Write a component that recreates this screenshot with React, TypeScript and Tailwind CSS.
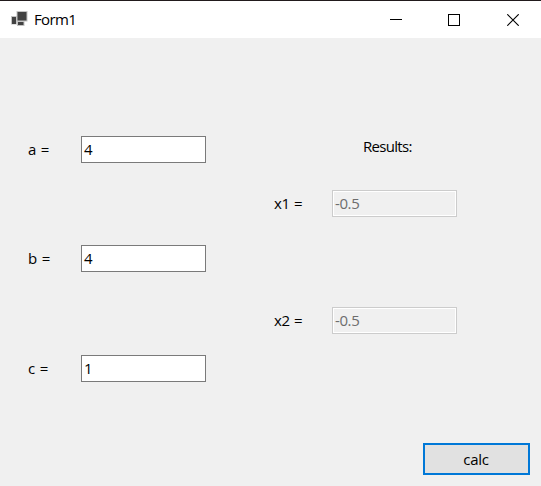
import React from "react";

function Field({ label, value, disabled = false }: { label: string; value: string; disabled?: boolean }) {
  return (
    <div className="flex h-[27px] items-center">
      <span className={disabled ? "w-[58px] pb-0.5 tracking-[-0.4px] [word-spacing:1px]" : "w-[53px] pb-0.5 tracking-[-0.3px] [word-spacing:1.2px]"}>
        {label}
      </span>
      <div
        className={
          disabled
            ? "h-[27px] w-[125px] border border-[#cccccc] bg-white p-px text-[#6d6d6d]"
            : "h-[27px] w-[125px] border border-[#7a7a7a] bg-white p-px"
        }
      >
        <div className={disabled ? "h-full bg-[#f0f0f0] pl-px leading-[23px] tracking-[-0.4px]" : "h-full pl-px leading-[23px]"}>
          {value}
        </div>
      </div>
    </div>
  );
}

export default function App() {
  return (
    <div className="flex h-[486px] w-[541px] flex-col overflow-hidden border-t border-[#211a1c] bg-[#f0f0f0] font-['Open_Sans','Noto_Sans',sans-serif] text-[15px] leading-5 text-black">
      <header className="flex h-[37px] shrink-0 items-center bg-white pl-[11px] pr-[22px]">
        <svg width="17" height="16" viewBox="0 0 17 16" className="-mt-px">
          <path d="M5.5 0h11v10.5h-3V15h-7.500v-1.500H0V5h5.500z" fill="#c4c4c4" />
          <path d="M6.500 1h9v8.500h-9zM1 6h4v7H1zM7 11h5.500v3H7z" fill="#424242" />
        </svg>
        <h1 className="ml-[6px] mr-auto pb-0.5 tracking-[-0.65px]">Form1</h1>
        <div className="flex gap-[46px]">
          <svg width="12" height="12" viewBox="0 0 12 12" shapeRendering="crispEdges">
            <path d="M0 5.5h12" stroke="#000" />
          </svg>
          <svg width="12" height="12" viewBox="0 0 12 12" shapeRendering="crispEdges">
            <path d="M.5.5h11v11H.5z" fill="none" stroke="#000" />
          </svg>
          <svg width="12" height="12" viewBox="0 0 12 12" className="ml-px">
            <path d="M.3.3l11.4 11.4M11.7.3L.3 11.7" stroke="#000" strokeWidth="1.15" />
          </svg>
        </div>
      </header>
      <main className="flex grow items-start">
        <section className="flex w-[274px] flex-col pl-7 pt-[98px]">
          <Field label="a =" value="4" />
          <div className="h-[82px]" />
          <Field label="b =" value="4" />
          <div className="h-[83px]" />
          <Field label="c =" value="1" />
        </section>
        <section className="flex w-[256px] flex-col pt-[98px]">
          <p className="ml-[89px] tracking-[-0.7px]">Results:</p>
          <div className="mt-[34px]">
            <Field label="x1 =" value="-0.5" disabled />
          </div>
          <div className="mt-[90px]">
            <Field label="x2 =" value="-0.5" disabled />
          </div>
          <button className="mt-[109px] h-8 w-[107px] self-end border-2 border-[#0078d7] bg-[#e1e1e1] pb-px pr-px tracking-[-0.3px]">
            calc
          </button>
        </section>
      </main>
    </div>
  );
}
